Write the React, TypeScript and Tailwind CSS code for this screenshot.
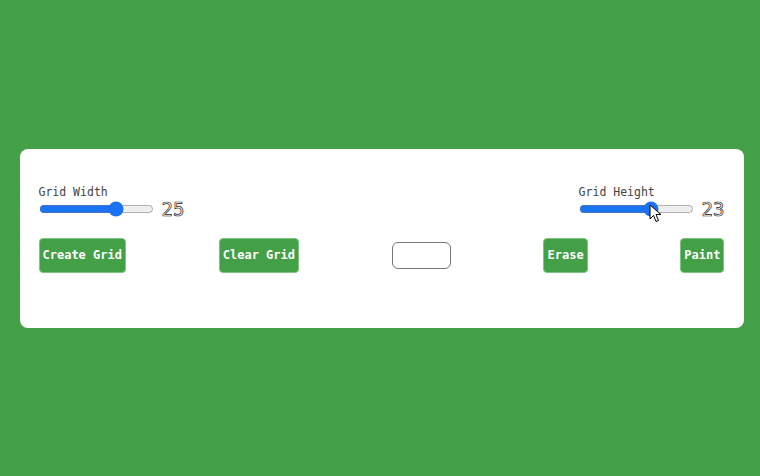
import { useState } from "react";

interface SliderProps {
  label: string;
  value: number;
  onChange: (v: number) => void;
  hover?: boolean;
}

const SizeSlider = ({ label, value, onChange, hover }: SliderProps) => {
  return (
    <div className="relative flex flex-col">
      <label className="text-[11.5px] leading-[14px] text-[#444] [font-family:'DejaVu_Sans_Mono',monospace]">
        {label}
      </label>
      <div className="mt-0 flex items-center gap-[8px]">
        <input
          type="range"
          min={1}
          max={35}
          value={value}
          onChange={(e) => onChange(Number(e.target.value))}
          className="m-0 h-[16px] w-[115px] accent-[#1a73f5]"
        />
        <span className="text-[19px] leading-[20px] text-white [-webkit-text-stroke:0.7px_#222] [font-family:'DejaVu_Sans_Mono',monospace]">
          {value}
        </span>
      </div>
      {hover && (
        <svg
          className="pointer-events-none absolute left-[70px] top-[19px]"
          width="14"
          height="20"
          viewBox="0 0 14 20"
        >
          <path
            d="M1 1 L1 15 L4.5 11.5 L7 17.5 L9.5 16.5 L7 10.5 L12 10.5 Z"
            fill="#fff"
            stroke="#000"
            strokeWidth="1"
            strokeLinejoin="round"
          />
        </svg>
      )}
    </div>
  );
};

const GreenButton = ({ text }: { text: string }) => (
  <button
    type="button"
    className="h-[35px] rounded-[4px] border border-[#7cc47f] bg-[#43a047] px-[3px] text-[12px] font-bold text-white [font-family:'DejaVu_Sans_Mono',monospace]"
  >
    {text}
  </button>
);

const App = () => {
  const [width, setWidth] = useState<number>(25);
  const [height, setHeight] = useState<number>(23);

  return (
    <div className="flex h-[476px] w-[760px] items-center justify-center bg-[#43a047] pl-[3px]">
      <div className="h-[179px] w-[724px] rounded-[8px] bg-white px-[19px] pt-[36px]">
        <div className="flex items-start justify-between">
          <SizeSlider label="Grid Width" value={width} onChange={setWidth} />
          <SizeSlider
            label="Grid Height"
            value={height}
            onChange={setHeight}
            hover
          />
        </div>
        <div className="mt-[19px] flex items-center justify-between">
          <GreenButton text="Create Grid" />
          <GreenButton text="Clear Grid" />
          <input
            type="text"
            className="h-[27px] w-[59px] rounded-[6px] border border-[#777] bg-white"
          />
          <GreenButton text="Erase" />
          <GreenButton text="Paint" />
        </div>
      </div>
    </div>
  );
};

export default App;
